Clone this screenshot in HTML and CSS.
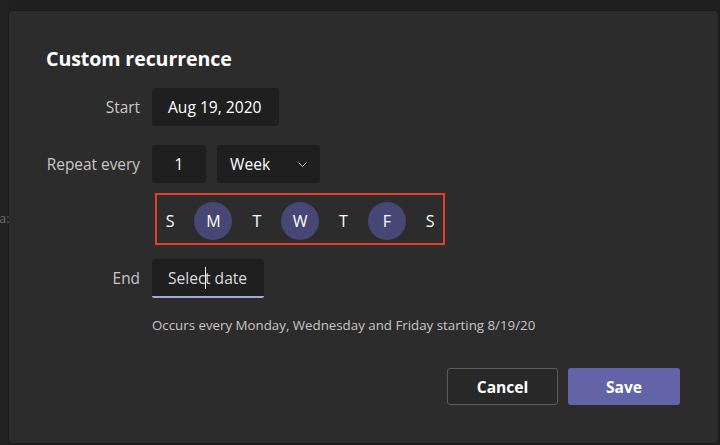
FILE: index.html
```html
<!DOCTYPE html>
<html lang="en">

<head>
    <meta charset="UTF-8">
    <meta name="viewport" content="width=device-width, initial-scale=1.0">
    <title>Custom recurrence</title>
    <link rel="stylesheet" href="styles.css">
</head>

<body>
    <div class="backdrop">
        <span class="peek">a:</span>
    </div>
    <div class="dialog">
        <h1 class="dialog-title">Custom recurrence</h1>

        <div class="row row-start">
            <span class="label">Start</span>
            <div class="field field-date">Aug 19, 2020</div>
        </div>

        <div class="row row-repeat">
            <span class="label">Repeat every</span>
            <div class="field field-num">1</div>
            <div class="field field-select">
                <span>Week</span>
                <svg class="chevron" width="11" height="7" viewBox="0 0 11 7">
                    <path d="M1.5 1.5 L5.5 5.5 L9.5 1.5" fill="none" stroke="#d0d0d0" stroke-width="1" />
                </svg>
            </div>
        </div>

        <div class="row row-days">
            <span class="label"></span>
            <div class="days">
                <div class="days-inner">
                    <span class="day">S</span>
                    <span class="day on">M</span>
                    <span class="day">T</span>
                    <span class="day on">W</span>
                    <span class="day">T</span>
                    <span class="day on">F</span>
                    <span class="day">S</span>
                </div>
            </div>
        </div>

        <div class="row row-end">
            <span class="label">End</span>
            <div class="field field-end">Selec<span class="caret"></span>t date</div>
        </div>

        <p class="summary">Occurs every Monday, Wednesday and Friday starting 8/19/20</p>

        <div class="actions">
            <button class="btn btn-cancel">Cancel</button>
            <button class="btn btn-save">Save</button>
        </div>
    </div>
</body>

</html>
```

FILE: styles.css
```css
* {
    margin: 0;
    padding: 0;
    box-sizing: border-box;
}

body {
    width: 720px;
    height: 445px;
    overflow: hidden;
    background: #1f1f1f;
    font-family: "Open Sans", "Noto Sans", sans-serif;
    color: #fff;
    position: relative;
}

.backdrop {
    position: absolute;
    left: 0;
    top: 0;
    width: 9px;
    height: 445px;
    background: #222;
    overflow: hidden;
}

.peek {
    position: absolute;
    left: -1px;
    top: 209px;
    font-size: 13px;
    color: #6a6a6a;
}

.dialog {
    position: absolute;
    left: 9px;
    top: 11px;
    width: 709px;
    height: 432px;
    background: #2d2c2c;
    border-radius: 4px;
    padding: 34px 37px 0 37px;
    box-shadow: 0 0 2px rgba(0, 0, 0, 0.5);
}

.dialog-title {
    font-size: 19.6px;
    font-weight: 700;
    line-height: 28px;
    letter-spacing: -0.1px;
    margin-bottom: 15px;
}

.row {
    display: flex;
    align-items: center;
}

.label {
    flex: 0 0 94px;
    display: flex;
    justify-content: flex-end;
    margin-right: 12px;
    white-space: nowrap;
    font-size: 15.4px;
    color: #c8c6c4;
}

.field {
    height: 38px;
    background: #1f1f1f;
    border-radius: 3px;
    font-size: 15.6px;
    display: flex;
    align-items: center;
}

.field-date {
    width: 127px;
    padding-left: 16px;
}

.row-repeat {
    margin-top: 19px;
}

.field-num {
    width: 54px;
    justify-content: center;
    margin-right: 11px;
}

.field-select {
    width: 103px;
    padding: 0 12px 0 13px;
    justify-content: space-between;
}

.chevron {
    margin-top: 1px;
}

.row-days {
    margin-top: 10px;
}

.row-days .label {
    flex-basis: 97px;
}

.days {
    width: 290px;
    height: 52px;
    border: 2px solid #e0402b;
    display: flex;
    align-items: center;
}

.days-inner {
    display: grid;
    grid-template-columns: repeat(7, 43.33px);
    margin-left: -8.5px;
    margin-top: 4px;
}

.day {
    justify-self: center;
    width: 38px;
    height: 38px;
    border-radius: 50%;
    display: flex;
    align-items: center;
    justify-content: center;
    font-size: 16px;
}

.day.on {
    background: #464775;
}

.row-end {
    margin-top: 14px;
}

.field-end {
    width: 112px;
    height: 39px;
    padding-left: 16px;
    color: #dcdcdc;
    border-bottom: 2px solid #a6a7dc;
    border-radius: 3px 3px 2px 2px;
}

.caret {
    display: inline-block;
    width: 0;
    height: 22px;
    border-left: 1.5px solid #fff;
    margin-right: -1.5px;
}

.summary {
    margin-top: 18px;
    margin-left: 106px;
    font-size: 13.3px;
    color: #c8c6c4;
}

.actions {
    display: flex;
    justify-content: flex-end;
    gap: 10px;
    margin-top: 34px;
    padding-right: 1px;
}

.btn {
    width: 111px;
    height: 37px;
    border-radius: 3px;
    font-family: inherit;
    font-size: 15.6px;
    font-weight: 700;
    color: #fff;
    cursor: pointer;
}

.btn-cancel {
    background: #292828;
    border: 1px solid #5d5c5c;
}

.btn-save {
    width: 112px;
    background: #6264a7;
    border: none;
}
```
